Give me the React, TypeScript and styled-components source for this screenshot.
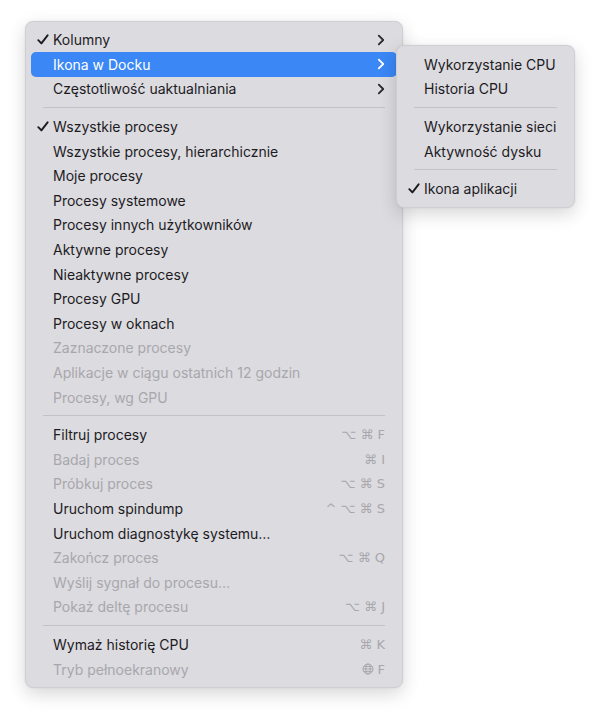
import React from "react"
import styled, { createGlobalStyle } from "styled-components"

type Item = {
    label: string
    checked?: boolean
    disabled?: boolean
    submenu?: boolean
    active?: boolean
    shortcut?: string
    globe?: boolean
}

const sections: Item[][] = [
    [
        { label: "Kolumny", checked: true, submenu: true },
        { label: "Ikona w Docku", submenu: true, active: true },
        { label: "Częstotliwość uaktualniania", submenu: true },
    ],
    [
        { label: "Wszystkie procesy", checked: true },
        { label: "Wszystkie procesy, hierarchicznie" },
        { label: "Moje procesy" },
        { label: "Procesy systemowe" },
        { label: "Procesy innych użytkowników" },
        { label: "Aktywne procesy" },
        { label: "Nieaktywne procesy" },
        { label: "Procesy GPU" },
        { label: "Procesy w oknach" },
        { label: "Zaznaczone procesy", disabled: true },
        { label: "Aplikacje w ciągu ostatnich 12 godzin", disabled: true },
        { label: "Procesy, wg GPU", disabled: true },
    ],
    [
        { label: "Filtruj procesy", shortcut: "⌥ ⌘ F" },
        { label: "Badaj proces", disabled: true, shortcut: "⌘ I" },
        { label: "Próbkuj proces", disabled: true, shortcut: "⌥ ⌘ S" },
        { label: "Uruchom spindump", shortcut: "^ ⌥ ⌘ S" },
        { label: "Uruchom diagnostykę systemu…" },
        { label: "Zakończ proces", disabled: true, shortcut: "⌥ ⌘ Q" },
        { label: "Wyślij sygnał do procesu…", disabled: true },
        { label: "Pokaż deltę procesu", disabled: true, shortcut: "⌥ ⌘ J" },
    ],
    [
        { label: "Wymaż historię CPU", shortcut: "⌘ K" },
        { label: "Tryb pełnoekranowy", disabled: true, shortcut: "F", globe: true },
    ],
]

const subSections: Item[][] = [
    [{ label: "Wykorzystanie CPU" }, { label: "Historia CPU" }],
    [{ label: "Wykorzystanie sieci" }, { label: "Aktywność dysku" }],
    [{ label: "Ikona aplikacji", checked: true }],
]

const Check = () => (
    <svg width="12" height="11" viewBox="0 0 12 11">
        <path d="M1.3 6.2 L4.4 9.4 L10.6 1.3" fill="none" stroke="currentColor" strokeWidth="1.9" strokeLinecap="round" strokeLinejoin="round" />
    </svg>
)

const Chevron = () => (
    <svg width="8" height="12" viewBox="0 0 8 12">
        <path d="M1.8 1.6 L6.2 6 L1.8 10.4" fill="none" stroke="currentColor" strokeWidth="1.8" strokeLinecap="round" strokeLinejoin="round" />
    </svg>
)

const Globe = () => (
    <svg width="12" height="12" viewBox="0 0 12 12">
        <g fill="none" stroke="currentColor" strokeWidth="1">
            <circle cx="6" cy="6" r="5" />
            <ellipse cx="6" cy="6" rx="2.2" ry="5" />
            <path d="M1 6 H11 M2 3.4 H10 M2 8.6 H10" />
        </g>
    </svg>
)

const MenuList: React.FC<{ data: Item[][] }> = ({ data }) => (
    <>
        {data.map((section, si) => (
            <React.Fragment key={si}>
                {si > 0 && <Separator />}
                {section.map((item) => (
                    <Row key={item.label} $active={item.active} $disabled={item.disabled}>
                        <span className="check">{item.checked && <Check />}</span>
                        <span className="label">{item.label}</span>
                        {item.shortcut && (
                            <span className="shortcut">
                                {item.globe && <Globe />}
                                {item.shortcut}
                            </span>
                        )}
                        {item.submenu && <span className="chevron"><Chevron /></span>}
                    </Row>
                ))}
            </React.Fragment>
        ))}
    </>
)

export default function App() {
    return (
        <>
            <GlobalStyle />
            <Page>
                <MenuWrap>
                    <Menu>
                        <MenuList data={sections} />
                    </Menu>
                    <SubMenu>
                        <MenuList data={subSections} />
                    </SubMenu>
                </MenuWrap>
            </Page>
        </>
    )
}

const GlobalStyle = createGlobalStyle`
body{
    margin: 0;
    background: #ffffff;
    font-family: Inter, "Liberation Sans", sans-serif;
}
`

const Page = styled.div`
padding: 21px 0 0 25px;
height: 717px;
box-sizing: border-box;
`

const MenuWrap = styled.div`
position: relative;
width: 378px;
`

const Menu = styled.div`
width: 378px;
box-sizing: border-box;
padding: 5.5px 5px;
background: #dcdbe0;
border: 1px solid #cfced3;
border-radius: 8px;
box-shadow: 0 6px 18px rgba(0,0,0,0.16), 0 0 2px rgba(0,0,0,0.08);
`

const SubMenu = styled(Menu)`
position: absolute;
left: 371px;
top: 24px;
width: 179px;
padding: 6px 5px;
`

const Row = styled.div<{ $active?: boolean; $disabled?: boolean }>`
display: flex;
align-items: center;
height: 24.6px;
padding: 0 12px 0 6px;
border-radius: 5px;
font-size: 14px;
color: ${p => p.$active ? "#ffffff" : p.$disabled ? "#a8a7ac" : "#1c1b1f"};
background: ${p => p.$active ? "#3a87f5" : "transparent"};
.check{
    width: 16px;
    display: flex;
    align-items: center;
}
.label{
    flex: 1;
    white-space: nowrap;
}
.shortcut{
    display: flex;
    align-items: center;
    gap: 4px;
    color: #a8a7ac;
    font-family: "DejaVu Sans", sans-serif;
    font-size: 13px;
}
.chevron{
    display: flex;
    align-items: center;
    color: ${p => p.$active ? "#ffffff" : "#2a292e"};
}
`

const Separator = styled.div`
height: 1px;
margin: 6px 12px;
background: #c3c2c7;
`
